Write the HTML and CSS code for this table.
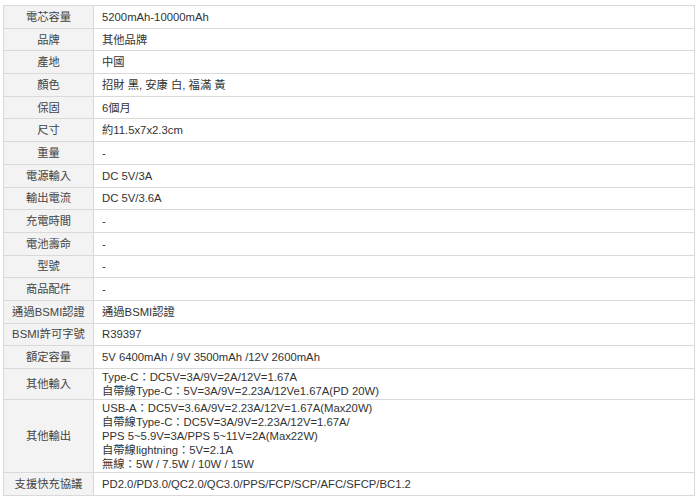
FILE: index.html
```html
<!DOCTYPE html>
<html>
<head>
<meta charset="utf-8">
<link rel="stylesheet" href="styles.css">
</head>
<body>
<table class="spec">
<tr><th>電芯容量</th><td>5200mAh-10000mAh</td></tr>
<tr><th>品牌</th><td>其他品牌</td></tr>
<tr><th>產地</th><td>中國</td></tr>
<tr><th>顏色</th><td>招財 黑, 安康 白, 福滿 黃</td></tr>
<tr><th>保固</th><td>6個月</td></tr>
<tr><th>尺寸</th><td>約11.5x7x2.3cm</td></tr>
<tr><th>重量</th><td>-</td></tr>
<tr><th>電源輸入</th><td>DC 5V/3A</td></tr>
<tr><th>輸出電流</th><td>DC 5V/3.6A</td></tr>
<tr><th>充電時間</th><td>-</td></tr>
<tr><th>電池壽命</th><td>-</td></tr>
<tr><th>型號</th><td>-</td></tr>
<tr><th>商品配件</th><td>-</td></tr>
<tr><th>通過BSMI認證</th><td>通過BSMI認證</td></tr>
<tr><th>BSMI許可字號</th><td>R39397</td></tr>
<tr><th>額定容量</th><td>5V 6400mAh / 9V 3500mAh /12V 2600mAh</td></tr>
<tr class="multi"><th>其他輸入</th><td>Type-C：DC5V=3A/9V=2A/12V=1.67A<br>自帶線Type-C：5V=3A/9V=2.23A/12Ve1.67A(PD 20W)</td></tr>
<tr class="multi"><th>其他輸出</th><td>USB-A：DC5V=3.6A/9V=2.23A/12V=1.67A(Max20W)<br>自帶線Type-C：DC5V=3A/9V=2.23A/12V=1.67A/<br>PPS 5~5.9V=3A/PPS 5~11V=2A(Max22W)<br>自帶線lightning：5V=2.1A<br>無線：5W / 7.5W / 10W / 15W</td></tr>
<tr><th>支援快充協議</th><td>PD2.0/PD3.0/QC2.0/QC3.0/PPS/FCP/SCP/AFC/SFCP/BC1.2</td></tr>
</table>
</body>
</html>
```
FILE: styles.css
```css
html, body {
  margin: 0;
  padding: 0;
  background: #fff;
}
body {
  padding: 5px 0 0 3px;
  font-family: "Liberation Sans", "Noto Sans CJK TC", Arial, sans-serif;
  font-size: 11.3px;
  color: #333;
}
.spec {
  border-collapse: collapse;
  width: 692px;
}
.spec th, .spec td {
  border: 1px solid #d9d9d9;
  line-height: 14px;
  height: 21.7px;
  padding: 0;
  vertical-align: middle;
}
.spec th {
  width: 89px;
  background: #f3f3f3;
  font-weight: normal;
  text-align: center;
  color: #444;
}
.spec td {
  text-align: left;
  padding-left: 8px;
}
.spec .multi th, .spec .multi td {
  padding-top: 1px;
  padding-bottom: 1px;
}
```
